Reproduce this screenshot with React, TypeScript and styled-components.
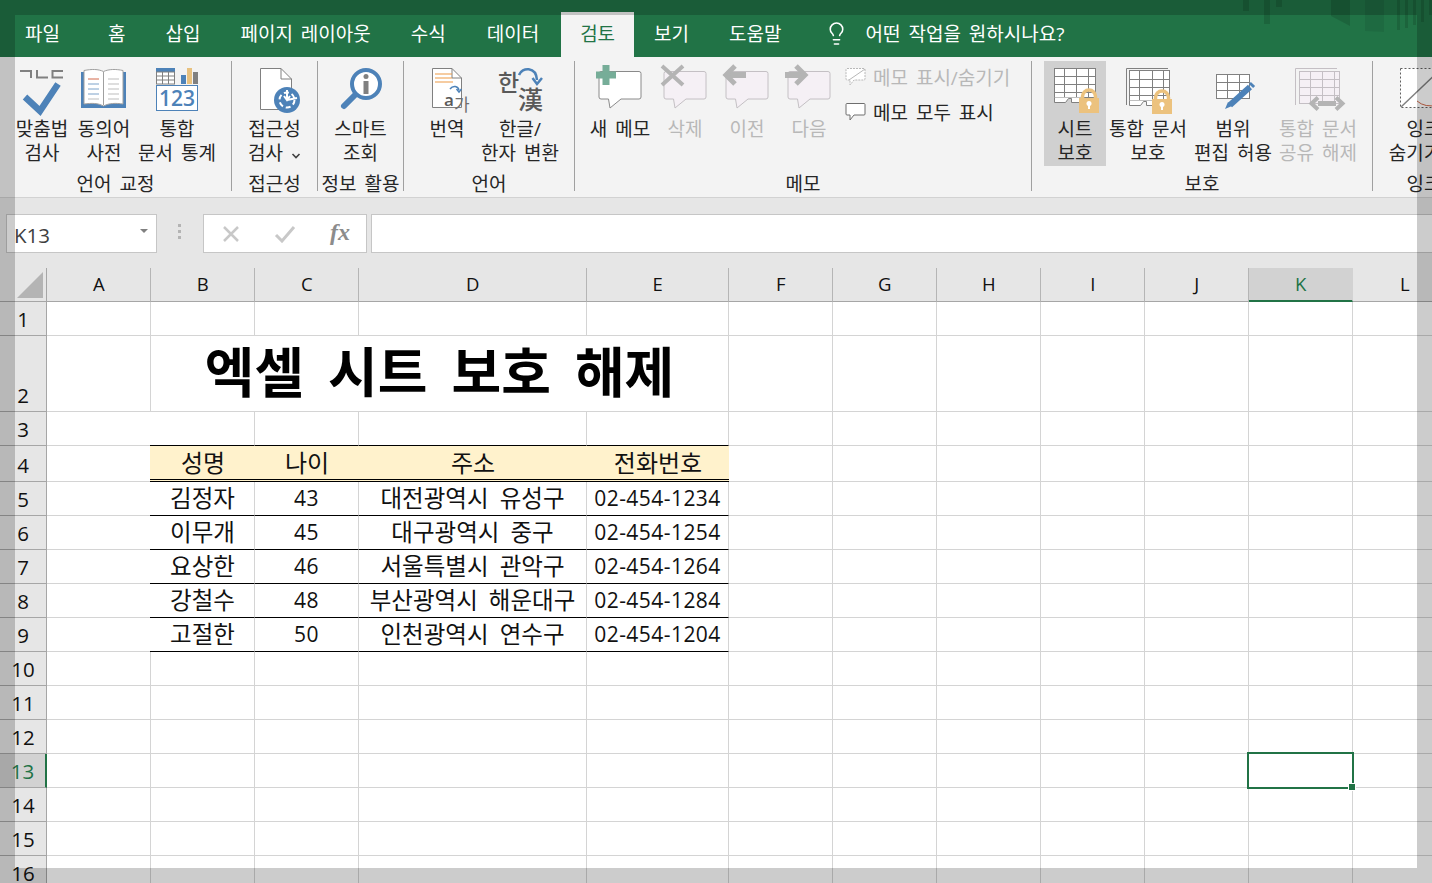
import React from 'react';
import styled, { createGlobalStyle } from 'styled-components';
import { Lightbulb } from 'lucide-react';

const BLUE = '#4d82b8';
const GRAY = '#808080';
const GREEN = '#217346';
const FONT = `'Open Sans', 'Noto Sans CJK KR', sans-serif`;

const GlobalStyle = createGlobalStyle`
  html, body {
    margin: 0;
    padding: 0;
    background: #fff;
  }
  body {
    font-family: ${FONT};
    color: #262626;
  }
`;

const Page = styled.div`
  position: relative;
  width: 1432px;
  height: 883px;
  overflow: hidden;
  display: flex;
  flex-direction: column;
`;

const Frame = styled.div`
  position: absolute;
  inset: 0;
  border: 15px solid rgba(0, 0, 0, 0.2);
  pointer-events: none;
  z-index: 10;
`;

const Backdrop = styled.svg`
  position: absolute;
  right: 0;
  top: 0;
  pointer-events: none;
`;

const TabBar = styled.div`
  position: relative;
  height: 57px;
  flex: none;
  background: ${GREEN};
  display: flex;
  align-items: flex-end;
  padding-left: 5px;
  box-sizing: border-box;
`;

const Tab = styled.div<{ $active?: boolean; $extra?: number }>`
  position: relative;
  height: 45px;
  box-sizing: border-box;
  display: flex;
  align-items: center;
  padding: 0 ${(p) => (p.$active ? 19 : 20)}px 3px;
  padding-right: ${(p) => (p.$active ? 19 : 20 + (p.$extra ?? 0))}px;
  font-size: 19px;
  word-spacing: 3px;
  white-space: nowrap;
  color: ${(p) => (p.$active ? GREEN : '#fff')};
  background: ${(p) => (p.$active ? '#f3f3f3' : 'transparent')};
`;

const TellMe = styled.div`
  position: relative;
  display: flex;
  align-items: center;
  gap: 17px;
  height: 45px;
  padding: 0 0 3px 22px;
  box-sizing: border-box;
  color: #fff;
  font-size: 19px;
  word-spacing: 3px;
  white-space: nowrap;
`;

const Ribbon = styled.div`
  height: 141px;
  flex: none;
  box-sizing: border-box;
  background: #f3f3f3;
  border-bottom: 1px solid #d2d2d2;
  padding-top: 4px;
  display: flex;
  overflow: hidden;
`;

const Group = styled.div<{ $w: number; $pad?: number; $plain?: boolean }>`
  width: ${(p) => p.$w}px;
  height: 130px;
  flex: none;
  box-sizing: border-box;
  border-right: ${(p) => (p.$plain ? 'none' : '1px solid #a0a0a0')};
  display: flex;
  flex-direction: column;
  > div:first-child {
    padding-left: ${(p) => p.$pad ?? 0}px;
  }
`;

const Buttons = styled.div`
  display: flex;
  height: 105px;
`;

const GroupLabel = styled.div`
  text-align: center;
  font-size: 19px;
  word-spacing: 3px;
  line-height: 24px;
  margin-top: 6px;
  white-space: nowrap;
  color: #262626;
`;

const Button = styled.div<{ $w: number; $on?: boolean; $off?: boolean }>`
  width: ${(p) => p.$w}px;
  height: 105px;
  flex: none;
  display: flex;
  flex-direction: column;
  align-items: center;
  background: ${(p) => (p.$on ? '#d0d0d0' : 'transparent')};
  color: ${(p) => (p.$off ? '#b8b8b8' : '#262626')};
`;

const Icon = styled.svg`
  display: block;
  flex: none;
  width: 64px;
  height: 55px;
`;

const ButtonText = styled.div`
  margin-top: 1px;
  font-size: 19px;
  word-spacing: 3px;
  line-height: 24px;
  text-align: center;
  white-space: pre;
`;

const SmallColumn = styled.div`
  margin: -2px 0 0 5px;
  display: flex;
  flex-direction: column;
`;

const SmallRow = styled.div<{ $off?: boolean }>`
  height: 35px;
  display: flex;
  align-items: center;
  gap: 7px;
  font-size: 19px;
  word-spacing: 3px;
  white-space: nowrap;
  color: ${(p) => (p.$off ? '#b8b8b8' : '#262626')};
`;

const FormulaBar = styled.div`
  height: 70px;
  flex: none;
  box-sizing: border-box;
  background: #e6e6e6;
  padding: 16px 0 15px 6px;
  display: flex;
`;

const NameBox = styled.div`
  width: 151px;
  box-sizing: border-box;
  background: #fff;
  border: 1px solid #c6c6c6;
  display: flex;
  align-items: center;
  justify-content: space-between;
  padding: 2px 8px 0 7px;
  font-size: 20.500px;
  color: #404040;
`;

const NameCaret = styled.span`
  width: 0;
  height: 0;
  border-left: 4px solid transparent;
  border-right: 4px solid transparent;
  border-top: 4px solid #808080;
  margin-top: -8px;
`;

const Grip = styled.div`
  width: 46px;
  display: flex;
  flex-direction: column;
  align-items: center;
  justify-content: center;
  gap: 3px;
  padding: 0 1px 4px 0;
  box-sizing: border-box;
  i {
    width: 3px;
    height: 3px;
    background: #b4b4b4;
  }
`;

const FnBox = styled.div`
  width: 164px;
  box-sizing: border-box;
  background: #fff;
  border: 1px solid #c6c6c6;
  display: flex;
  align-items: center;
  padding-left: 17px;
  gap: 33px;
`;

const FnGlyph = styled.span`
  font-family: 'Liberation Serif', serif;
  font-style: italic;
  font-weight: bold;
  font-size: 24px;
  color: #8c8c8c;
  line-height: 1;
  margin: -3px 0 0 1px;
`;

const FormulaInput = styled.div`
  flex: 1;
  margin-left: 4px;
  background: #fff;
  border: 1px solid #c6c6c6;
  border-right: none;
`;

const Sheet = styled.div`
  flex: none;
  display: grid;
  grid-template-columns: 47px 104px 104px 104px 228px 142px repeat(7, 104px);
  grid-template-rows: 34px 34px 76px 34px 36px repeat(12, 34px);
  width: 1432px;
  overflow: hidden;
  background: #fff;
`;

const Corner = styled.div`
  background: #e6e6e6;
  border-right: 1px solid #a6a6a6;
  border-bottom: 1px solid #a6a6a6;
  box-sizing: border-box;
  display: flex;
  align-items: flex-end;
  justify-content: flex-end;
  padding: 0 3px 3px 0;
  &::before {
    content: '';
    width: 26px;
    height: 26px;
    background: #b4b4b4;
    clip-path: polygon(100% 0, 100% 100%, 0 100%);
  }
`;

const ColHead = styled.div<{ $sel?: boolean }>`
  box-sizing: border-box;
  background: ${(p) => (p.$sel ? '#d2d2d2' : '#e6e6e6')};
  color: ${(p) => (p.$sel ? GREEN : '#111')};
  border-right: 1px solid ${(p) => (p.$sel ? '#d2d2d2' : '#b5b5b5')};
  border-bottom: ${(p) => (p.$sel ? `2px solid ${GREEN}` : '1px solid #a6a6a6')};
  display: flex;
  align-items: center;
  justify-content: center;
  font-size: 18.500px;
  padding: 0 0 2px 0.5px;
`;

const RowHead = styled.div<{ $sel?: boolean }>`
  box-sizing: border-box;
  background: ${(p) => (p.$sel ? '#d2d2d2' : '#e6e6e6')};
  color: ${(p) => (p.$sel ? GREEN : '#111')};
  border-right: ${(p) => (p.$sel ? `2px solid ${GREEN}` : '1px solid #a6a6a6')};
  border-bottom: 1px solid #a6a6a6;
  display: flex;
  align-items: flex-end;
  justify-content: center;
  font-size: 20.500px;
  line-height: 28px;
  padding-bottom: 2px;
`;

const Cell = styled.div<{ $kind?: 'head' | 'data' | 'above'; $first?: boolean }>`
  position: relative;
  box-sizing: border-box;
  min-width: 0;
  margin-left: ${(p) => (p.$first ? -1 : 0)}px;
  display: flex;
  align-items: center;
  justify-content: center;
  white-space: nowrap;
  padding-bottom: ${(p) => (p.$kind === 'head' ? 3 : p.$kind === 'data' ? 4 : 0)}px;
  padding-left: ${(p) => (p.$first ? 1 : 0)}px;
  font-size: ${(p) => (p.$kind === 'head' ? 24 : 23.5)}px;
  word-spacing: 5px;
  color: #111;
  background: ${(p) => (p.$kind === 'head' ? '#fff2cc' : '#fff')};
  border-right: ${(p) => (p.$kind === 'head' ? 'none' : '1px solid #d4d4d4')};
  border-bottom: ${(p) =>
    p.$kind === 'head'
      ? '3px double #000'
      : p.$kind
        ? '1px solid #000'
        : '1px solid #d4d4d4'};
`;

const Title = styled(Cell)`
  grid-column: span 4;
  font-size: 54px;
  font-weight: 700;
  word-spacing: 10px;
  color: #000;
  padding-bottom: 8px;
`;

const Num = styled.span`
  font-size: 21px;
  letter-spacing: 0.45px;
  margin-top: 2px;
`;

const Selection = styled.div`
  position: absolute;
  left: -2px;
  top: -2px;
  right: -2px;
  bottom: -2px;
  border: 2px solid ${GREEN};
  z-index: 2;
  &::after {
    content: '';
    position: absolute;
    right: -4px;
    bottom: -4px;
    width: 6px;
    height: 6px;
    background: ${GREEN};
    border: 1px solid #fff;
  }
`;

const Grid = ({ x, y, w, h, cols, rows, c = GRAY, fill = '#fff' }: any) => (
  <g stroke={c} fill="none" strokeWidth="1">
    <rect x={x} y={y} width={w} height={h} fill={fill} />
    {cols.map((v: number) => (
      <path key={'c' + v} d={`M${v} ${y}V${y + h}`} />
    ))}
    {rows.map((v: number) => (
      <path key={'r' + v} d={`M${x} ${v}H${x + w}`} />
    ))}
  </g>
);

const Lock = ({ x, y }: { x: number; y: number }) => (
  <g transform={`translate(${x} ${y})`}>
    <path d="M3.500 12V8.500a6.500 6.500 0 0 1 13 0v3.500" fill="none" stroke="#ecc27e" strokeWidth="3.500" />
    <rect x="0" y="10" width="20" height="15" fill="#ecc27e" />
    <circle cx="10" cy="15.500" r="2.500" fill="#fff" />
    <rect x="9" y="16" width="2" height="5" fill="#fff" />
  </g>
);

const bubble = (fill: string, stroke: string) => (
  <path
    d="M13 10.500H51a2 2 0 0 1 2 2V36a2 2 0 0 1-2 2H33L22 47L20.500 38H13a2 2 0 0 1-2-2V12.500a2 2 0 0 1 2-2Z"
    fill={fill}
    stroke={stroke}
  />
);

const SpellIcon = () => (
  <Icon viewBox="0 0 64 55">
    <path d="M10 10H21V17M27 9V16.500H38M53 10H42.500V16.500H53" fill="none" stroke={GRAY} strokeWidth="2" />
    <path d="M15 36L30 50L48 23" fill="none" stroke={BLUE} strokeWidth="6.500" />
  </Icon>
);

const BookIcon = () => (
  <Icon viewBox="0 0 64 55">
    <rect x="9" y="11" width="45" height="36" fill={BLUE} />
    <path d="M12 9.500C20 8 26 8 31.500 10.500C37 8 44 8 51 9.500V43C44 42 37 42 31.500 45C26 42 20 42 12 43Z" fill="#fff" stroke="#a0a0a0" />
    <path d="M31.500 11V44" stroke="#a0a0a0" />
    <path d="M16 18H27" stroke="#d2694a" />
    <path d="M16 23H27M16 28H27M16 33H27" stroke="#7da2c9" />
    <path d="M16 38H27M36 18H47M36 23H47M36 28H47M36 33H47M36 38H47" stroke="#bdbdbd" />
  </Icon>
);

const StatsIcon = () => (
  <Icon viewBox="0 0 64 55">
    <rect x="11" y="7" width="19" height="4" fill={BLUE} />
    <Grid x={11.5} y={11} w={18} h={12} cols={[17.5, 23.5]} rows={[15, 19]} />
    <rect x="36" y="14" width="5" height="9" fill={BLUE} />
    <rect x="42" y="7" width="5" height="16" fill="#e8c17f" />
    <rect x="48" y="11" width="5" height="12" fill={GRAY} />
    <rect x="11.500" y="24.500" width="41" height="25" fill="#fff" stroke={BLUE} />
    <text x="32" y="45" textAnchor="middle" fontFamily="'Open Sans', sans-serif" fontSize="21" fontWeight="600" fill={BLUE}>
      123
    </text>
  </Icon>
);

const AccessIcon = () => (
  <Icon viewBox="0 0 64 55">
    <path d="M17.500 7.500H38L48.500 18V48.500H17.500Z" fill="#fff" stroke={GRAY} />
    <path d="M38 7.500V18H48.500" fill="none" stroke={GRAY} />
    <circle cx="44" cy="39" r="13" fill={BLUE} />
    <circle cx="44" cy="39" r="7.500" fill="none" stroke="#fff" strokeWidth="2" strokeDasharray="5 3" />
    <path d="M44 29V38M41 35L44 39L47 35M44 39L54 37" fill="none" stroke="#fff" strokeWidth="2" />
  </Icon>
);

const SmartIcon = () => (
  <Icon viewBox="0 0 64 55">
    <circle cx="37" cy="23" r="14" fill="#fff" stroke={BLUE} strokeWidth="4" />
    <path d="M26 34L15 45" stroke={BLUE} strokeWidth="6" strokeLinecap="round" />
    <circle cx="37" cy="15.500" r="2.500" fill={GRAY} />
    <rect x="34.500" y="20" width="5" height="13" fill={GRAY} />
  </Icon>
);

const TranslateIcon = () => (
  <Icon viewBox="0 0 64 55">
    <path d="M17.500 7.500H37L46.500 17V46.500H17.500Z" fill="#fff" stroke={GRAY} />
    <path d="M37 7.500V17H46.500" fill="none" stroke={GRAY} />
    <path d="M20 13H37M20 17H37M20 21H38" stroke="#ed9a45" strokeWidth="1.200" />
    <path d="M35 28C38 24 43 25 44 29" fill="none" stroke={BLUE} strokeWidth="1.500" />
    <path d="M41.500 28L44 31L46.500 28" fill="none" stroke={BLUE} strokeWidth="1.500" />
    <text x="29" y="45" fontFamily="'Open Sans', sans-serif" fontSize="17" fontWeight="600" fill="#595959">a</text>
    <text x="39" y="50" fontFamily="'Noto Sans CJK KR', sans-serif" fontSize="17" fill="#6e6e6e">가</text>
  </Icon>
);

const HanjaIcon = () => (
  <Icon viewBox="0 0 64 55">
    <text x="10" y="30" fontFamily="'Noto Sans CJK KR', sans-serif" fontSize="23" fontWeight="500" fill="#595959">한</text>
    <text x="30" y="48" fontFamily="'Noto Sans CJK KR', sans-serif" fontSize="25" fontWeight="500" fill="#595959">漢</text>
    <path d="M31 14C34 6 48 5 49 19" fill="none" stroke={BLUE} strokeWidth="2.500" />
    <path d="M44.500 17L49 23L54 17" fill="none" stroke={BLUE} strokeWidth="2.500" />
  </Icon>
);

const NewMemoIcon = () => (
  <Icon viewBox="0 0 64 55">
    {bubble('#fff', '#8a8a8a')}
    <path d="M18 4V24M8 14H28" stroke="#76ad98" strokeWidth="7" />
  </Icon>
);

const DeleteMemoIcon = () => (
  <Icon viewBox="0 0 64 55">
    {bubble('#f5f0f5', '#c4c0c4')}
    <path d="M9 5L30 24M30 5L9 24" stroke="#b4b4b4" strokeWidth="4" />
  </Icon>
);

const PrevMemoIcon = () => (
  <Icon viewBox="0 0 64 55">
    {bubble('#f5f0f5', '#c4c0c4')}
    <path d="M31 14H14" stroke="#b4b4b4" strokeWidth="6" />
    <path d="M20 5L11 14L20 23" fill="none" stroke="#b4b4b4" strokeWidth="5" />
  </Icon>
);

const NextMemoIcon = () => (
  <Icon viewBox="0 0 64 55">
    {bubble('#f5f0f5', '#c4c0c4')}
    <path d="M8 14H25" stroke="#b4b4b4" strokeWidth="6" />
    <path d="M19 5L28 14L19 23" fill="none" stroke="#b4b4b4" strokeWidth="5" />
  </Icon>
);

const SmallMemo = ({ dashed, c }: { dashed?: boolean; c: string }) => (
  <svg width="21" height="20" viewBox="0 0 21 20">
    <path
      d="M2 1.500H19a1 1 0 0 1 1 1V12a1 1 0 0 1-1 1H9L5 18V13H2a1 1 0 0 1-1-1V2.500a1 1 0 0 1 1-1Z"
      fill="#fff"
      stroke={c}
      strokeDasharray={dashed ? '2 1' : undefined}
    />
    {dashed && <path d="M4 13L20 2" stroke={c} />}
  </svg>
);

const Chevron = () => (
  <svg width="10" height="8" viewBox="0 0 10 8">
    <path d="M1.500 2L5 5.500L8.500 2" fill="none" stroke="#404040" strokeWidth="1.600" />
  </svg>
);

const SheetTabs = ({ x, y }: { x: number; y: number }) => (
  <path d={`M${x} ${y}V${y + 5}H${x + 11}L${x + 14} ${y + 1}H${x + 17}V${y + 5}H${x + 26}L${x + 30} ${y}`} fill="#fff" stroke={GRAY} />
);

const ProtectSheetIcon = () => (
  <Icon viewBox="0 0 64 55">
    <Grid x={11.5} y={7.5} w={41} h={29} cols={[21.5, 33.5, 45.5]} rows={[15.5, 23.5, 31.5]} />
    <SheetTabs x={11.5} y={36.5} />
    <Lock x={36} y={27} />
  </Icon>
);

const ProtectBookIcon = () => (
  <Icon viewBox="0 0 64 55">
    <path d="M10.500 44V7.500H52" fill="none" stroke={GRAY} />
    <Grid x={13.5} y={9.5} w={40} h={30} cols={[23.5, 36.5, 47.5]} rows={[18.5, 26.5, 34.5]} />
    <SheetTabs x={13.5} y={39.5} />
    <Lock x={36} y={28} />
  </Icon>
);

const RangeIcon = () => (
  <Icon viewBox="0 0 64 55">
    <Grid x={15.5} y={13.5} w={33} h={24} cols={[26.5, 38.5]} rows={[21.5, 29.5]} />
    <path d="M29 44L49 26" stroke={BLUE} strokeWidth="6" />
    <path d="M50 25L52 23" stroke={BLUE} strokeWidth="6" />
    <path d="M24 48L27 41L31 45Z" fill={BLUE} />
  </Icon>
);

const UnshareIcon = () => (
  <Icon viewBox="0 0 64 55">
    <path d="M9.500 44V7.500H51" fill="none" stroke="#c4bfc4" />
    <Grid x={13.5} y={10.5} w={40} h={32} cols={[24.5, 36.5, 48.5]} rows={[18.5, 26.5, 34.5]} c="#c4bfc4" fill="#f5f0f5" />
    <path d="M32 42.500H50" stroke="#b4b4b4" strokeWidth="5" />
    <path d="M32 36.500L25.500 42.500L32 48.500M50 36.500L56.500 42.500L50 48.500" fill="none" stroke="#b4b4b4" strokeWidth="4" />
  </Icon>
);

const InkIcon = () => (
  <Icon viewBox="0 0 64 55">
    <rect x="8.500" y="7.500" width="60" height="39" fill="#fff" stroke="#606060" strokeDasharray="2 2" />
    <path d="M25 40Q33 47 46 44" fill="none" stroke="#d2694a" />
    <path d="M9 46L50 7" stroke={GRAY} strokeWidth="1.500" />
  </Icon>
);

const COLS = ['A', 'B', 'C', 'D', 'E', 'F', 'G', 'H', 'I', 'J', 'K', 'L'];

const PEOPLE = [
  ['김정자', '43', '대전광역시 유성구', '02-454-1234'],
  ['이무개', '45', '대구광역시 중구', '02-454-1254'],
  ['요상한', '46', '서울특별시 관악구', '02-454-1264'],
  ['강철수', '48', '부산광역시 해운대구', '02-454-1284'],
  ['고절한', '50', '인천광역시 연수구', '02-454-1204'],
];

const renderRow = (row: number) => {
  const cells: React.ReactNode[] = [];
  COLS.forEach((col, i) => {
    const key = col + row;
    const inTable = i >= 1 && i <= 4;
    const first = i === 1;
    if (row === 2 && inTable) {
      if (first) cells.push(<Title key={key}>엑셀 시트 보호 해제</Title>);
      return;
    }
    if (row === 3 && inTable) {
      cells.push(<Cell key={key} $kind="above" $first={first} />);
    } else if (row === 4 && inTable) {
      cells.push(
        <Cell key={key} $kind="head" $first={first}>
          {['성명', '나이', '주소', '전화번호'][i - 1]}
        </Cell>,
      );
    } else if (row >= 5 && row <= 9 && inTable) {
      const v = PEOPLE[row - 5][i - 1];
      cells.push(
        <Cell key={key} $kind="data" $first={first}>
          {i === 2 || i === 4 ? <Num>{v}</Num> : v}
        </Cell>,
      );
    } else {
      cells.push(<Cell key={key}>{key === 'K13' && <Selection />}</Cell>);
    }
  });
  return cells;
};

export default function App() {
  const rows = Array.from({ length: 16 }, (_, i) => i + 1);
  return (
    <Page>
      <GlobalStyle />
      <TabBar>
        <Backdrop width="192" height="33" viewBox="1240 0 192 33" fill="rgba(0,0,0,0.13)">
          <path d="M1243 0h6v11h-6zM1264 0h6v24h-6zM1276 0h6v7h-6zM1331 0h19v26l-19-10zM1397 0h3v30h-3zM1405 0h3v28h-3zM1413 0h3v25h-3zM1421 0h3v22h-3zM1429 0h3v15h-3z" />
          <path d="M1365 0h19v32l-19-1z" fill="rgba(0,0,0,0.07)" />
        </Backdrop>
        <Tab $extra={8}>파일</Tab>
        <Tab>홈</Tab>
        <Tab>삽입</Tab>
        <Tab>페이지 레이아웃</Tab>
        <Tab $extra={1}>수식</Tab>
        <Tab $extra={2}>데이터</Tab>
        <Tab $active>검토</Tab>
        <Tab>보기</Tab>
        <Tab>도움말</Tab>
        <TellMe>
          <Lightbulb size={25} strokeWidth={1.5} />
          어떤 작업을 원하시나요?
        </TellMe>
      </TabBar>

      <Ribbon>
        <Group $w={232} $pad={11}>
          <Buttons>
            <Button $w={62}>
              <SpellIcon />
              <ButtonText>{'맞춤법\n검사'}</ButtonText>
            </Button>
            <Button $w={62}>
              <BookIcon />
              <ButtonText>{'동의어\n사전'}</ButtonText>
            </Button>
            <Button $w={84}>
              <StatsIcon />
              <ButtonText>{'통합\n문서 통계'}</ButtonText>
            </Button>
          </Buttons>
          <GroupLabel>언어 교정</GroupLabel>
        </Group>
        <Group $w={86}>
          <Buttons>
            <Button $w={85}>
              <AccessIcon />
              <ButtonText>
                {'접근성\n검사 '}
                <Chevron />
              </ButtonText>
            </Button>
          </Buttons>
          <GroupLabel>접근성</GroupLabel>
        </Group>
        <Group $w={86}>
          <Buttons>
            <Button $w={85}>
              <SmartIcon />
              <ButtonText>{'스마트\n조회'}</ButtonText>
            </Button>
          </Buttons>
          <GroupLabel>정보 활용</GroupLabel>
        </Group>
        <Group $w={171}>
          <Buttons>
            <Button $w={86}>
              <TranslateIcon />
              <ButtonText>번역</ButtonText>
            </Button>
            <Button $w={60}>
              <HanjaIcon />
              <ButtonText>{'한글/\n한자 변환'}</ButtonText>
            </Button>
          </Buttons>
          <GroupLabel>언어</GroupLabel>
        </Group>
        <Group $w={457} $pad={11}>
          <Buttons>
            <Button $w={68}>
              <NewMemoIcon />
              <ButtonText>새 메모</ButtonText>
            </Button>
            <Button $w={62} $off>
              <DeleteMemoIcon />
              <ButtonText>삭제</ButtonText>
            </Button>
            <Button $w={62} $off>
              <PrevMemoIcon />
              <ButtonText>이전</ButtonText>
            </Button>
            <Button $w={62} $off>
              <NextMemoIcon />
              <ButtonText>다음</ButtonText>
            </Button>
            <SmallColumn>
              <SmallRow $off>
                <SmallMemo dashed c="#b8b8b8" />
                메모 표시/숨기기
              </SmallRow>
              <SmallRow>
                <SmallMemo c="#6e6e6e" />
                메모 모두 표시
              </SmallRow>
            </SmallColumn>
          </Buttons>
          <GroupLabel>메모</GroupLabel>
        </Group>
        <Group $w={341} $pad={12}>
          <Buttons>
            <Button $w={62} $on>
              <ProtectSheetIcon />
              <ButtonText>{'시트\n보호'}</ButtonText>
            </Button>
            <Button $w={84}>
              <ProtectBookIcon />
              <ButtonText>{'통합 문서\n보호'}</ButtonText>
            </Button>
            <Button $w={86}>
              <RangeIcon />
              <ButtonText>{'범위\n편집 허용'}</ButtonText>
            </Button>
            <Button $w={84} $off>
              <UnshareIcon />
              <ButtonText>{'통합 문서\n공유 해제'}</ButtonText>
            </Button>
          </Buttons>
          <GroupLabel>보호</GroupLabel>
        </Group>
        <Group $w={102} $plain>
          <Buttons>
            <Button $w={102}>
              <InkIcon />
              <ButtonText>
                {'잉크\n숨기기 '}
                <Chevron />
              </ButtonText>
            </Button>
          </Buttons>
          <GroupLabel>잉크</GroupLabel>
        </Group>
      </Ribbon>

      <FormulaBar>
        <NameBox>
          K13
          <NameCaret />
        </NameBox>
        <Grip>
          <i />
          <i />
          <i />
        </Grip>
        <FnBox>
          <svg width="20" height="18" viewBox="0 0 20 18">
            <path d="M3 2L17 16M17 2L3 16" stroke="#c8c8c8" strokeWidth="2.500" />
          </svg>
          <svg width="22" height="18" viewBox="0 0 22 18">
            <path d="M2 10L8 16L20 2" fill="none" stroke="#c8c8c8" strokeWidth="3" />
          </svg>
          <FnGlyph>fx</FnGlyph>
        </FnBox>
        <FormulaInput />
      </FormulaBar>

      <Sheet>
        <Corner />
        {COLS.map((c) => (
          <ColHead key={c} $sel={c === 'K'}>
            {c}
          </ColHead>
        ))}
        {rows.map((r) => (
          <React.Fragment key={r}>
            <RowHead $sel={r === 13}>{r}</RowHead>
            {renderRow(r)}
          </React.Fragment>
        ))}
      </Sheet>
      <Frame />
    </Page>
  );
}
